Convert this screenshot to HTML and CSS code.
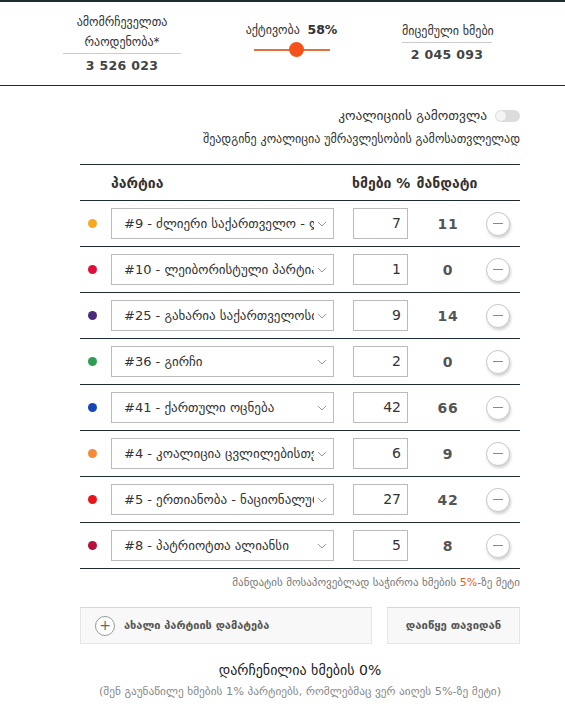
FILE: index.html
```html
<!DOCTYPE html>
<html lang="ka">
<head>
<meta charset="utf-8">
<link rel="stylesheet" href="styles.css">
</head>
<body>
<header class="stats">
  <div class="stat stat-voters">
    <div class="stat-label">ამომრჩეველთა<br>რაოდენობა*</div>
    <div class="stat-value">3 526 023</div>
  </div>
  <div class="stat stat-activity">
    <div class="activity-label">აქტივობა&nbsp; <b>58%</b></div>
    <div class="slider"><span class="slider-thumb" style="left:56%"></span></div>
  </div>
  <div class="stat stat-votes">
    <div class="stat-label">მიცემული ხმები</div>
    <div class="stat-value">2 045 093</div>
  </div>
</header>

<main class="content">
  <div class="coalition">
    <span>კოალიციის გამოთვლა</span>
    <span class="toggle"><span class="toggle-knob"></span></span>
  </div>
  <div class="coalition-hint">შეადგინე კოალიცია უმრავლესობის გამოსათვლელად</div>

  <div class="parties">
    <div class="row row-head">
      <span></span>
      <span class="head-party">პარტია</span>
      <span class="head-votes">ხმები %</span>
      <span class="head-mandates">მანდატი</span>
      <span></span>
    </div>

    <div class="row">
      <span class="dot" style="background:#f7a823"></span>
      <div class="select"><span class="select-text">#9 - ძლიერი საქართველო - ლელო, თავისუფლებისთვის</span><svg class="chev" viewBox="0 0 10 6" width="10" height="6"><polyline points="1,1 5,5 9,1"/></svg></div>
      <div class="num-input">7</div>
      <span class="mandates">11</span>
      <button class="remove"><span class="minus"></span></button>
    </div>

    <div class="row">
      <span class="dot" style="background:#e0103a"></span>
      <div class="select"><span class="select-text">#10 - ლეიბორისტული პარტია</span><svg class="chev" viewBox="0 0 10 6" width="10" height="6"><polyline points="1,1 5,5 9,1"/></svg></div>
      <div class="num-input">1</div>
      <span class="mandates">0</span>
      <button class="remove"><span class="minus"></span></button>
    </div>

    <div class="row">
      <span class="dot" style="background:#4a2d7a"></span>
      <div class="select"><span class="select-text">#25 - გახარია საქართველოსთვის</span><svg class="chev" viewBox="0 0 10 6" width="10" height="6"><polyline points="1,1 5,5 9,1"/></svg></div>
      <div class="num-input">9</div>
      <span class="mandates">14</span>
      <button class="remove"><span class="minus"></span></button>
    </div>

    <div class="row">
      <span class="dot" style="background:#2f9e55"></span>
      <div class="select"><span class="select-text">#36 - გირჩი</span><svg class="chev" viewBox="0 0 10 6" width="10" height="6"><polyline points="1,1 5,5 9,1"/></svg></div>
      <div class="num-input">2</div>
      <span class="mandates">0</span>
      <button class="remove"><span class="minus"></span></button>
    </div>

    <div class="row">
      <span class="dot" style="background:#1446b8"></span>
      <div class="select"><span class="select-text">#41 - ქართული ოცნება</span><svg class="chev" viewBox="0 0 10 6" width="10" height="6"><polyline points="1,1 5,5 9,1"/></svg></div>
      <div class="num-input">42</div>
      <span class="mandates">66</span>
      <button class="remove"><span class="minus"></span></button>
    </div>

    <div class="row">
      <span class="dot" style="background:#f28c38"></span>
      <div class="select"><span class="select-text">#4 - კოალიცია ცვლილებისთვის</span><svg class="chev" viewBox="0 0 10 6" width="10" height="6"><polyline points="1,1 5,5 9,1"/></svg></div>
      <div class="num-input">6</div>
      <span class="mandates">9</span>
      <button class="remove"><span class="minus"></span></button>
    </div>

    <div class="row">
      <span class="dot" style="background:#e8141c"></span>
      <div class="select"><span class="select-text">#5 - ერთიანობა - ნაციონალური მოძრაობა</span><svg class="chev" viewBox="0 0 10 6" width="10" height="6"><polyline points="1,1 5,5 9,1"/></svg></div>
      <div class="num-input">27</div>
      <span class="mandates">42</span>
      <button class="remove"><span class="minus"></span></button>
    </div>

    <div class="row">
      <span class="dot" style="background:#b5103c"></span>
      <div class="select"><span class="select-text">#8 - პატრიოტთა ალიანსი</span><svg class="chev" viewBox="0 0 10 6" width="10" height="6"><polyline points="1,1 5,5 9,1"/></svg></div>
      <div class="num-input">5</div>
      <span class="mandates">8</span>
      <button class="remove"><span class="minus"></span></button>
    </div>
  </div>

  <p class="threshold">მანდატის მოსაპოვებლად საჭიროა ხმების <span class="accent">5%</span>-ზე მეტი</p>

  <div class="actions">
    <button class="btn btn-add"><span class="plus">+</span>ახალი პარტიის დამატება</button>
    <button class="btn btn-reset">დაიწყე თავიდან</button>
  </div>

  <p class="remaining">დარჩენილია ხმების 0%</p>
  <p class="remaining-note">(შენ გაუნაწილე ხმების 1% პარტიებს, რომლებმაც ვერ აიღეს 5%-ზე მეტი)</p>
</main>
</body>
</html>
```

FILE: styles.css
```css
* { box-sizing: border-box; }

body {
  margin: 0;
  background: #fff;
  font-family: "DejaVu Sans", "Noto Sans", sans-serif;
  color: #333;
}

.stats {
  display: flex;
  align-items: center;
  gap: 65px;
  height: 86px;
  padding-left: 63px;
  border-top: 2px solid #1f2b30;
  border-bottom: 1px solid #1f2b30;
}

.stat {
  display: flex;
  flex-direction: column;
  align-items: center;
}

.stat-voters { width: 118px; }
.stat-activity { width: 91px; margin-bottom: 16px; }
.stat-votes { width: 90px; margin-bottom: 1px; }

.stat-label {
  width: 100%;
  text-align: center;
  font-size: 12px;
  line-height: 20px;
  white-space: nowrap;
  color: #333;
  border-bottom: 1px solid #ccc;
  padding-bottom: 1px;
}

.stat-value {
  font-size: 12.5px;
  font-weight: bold;
  line-height: 20px;
  color: #444;
  letter-spacing: 0.3px;
  margin-top: 2px;
}

.activity-label {
  font-size: 12px;
  line-height: 20px;
  white-space: nowrap;
}

.activity-label b { color: #333; font-size: 12.5px; }

.slider {
  position: relative;
  width: 76px;
  height: 2px;
  margin-top: 9px;
  background: #e07040;
}

.slider-thumb {
  position: absolute;
  top: -7px;
  width: 15px;
  height: 15px;
  margin-left: -7px;
  border-radius: 50%;
  background: #f4521a;
}

.content {
  width: 440px;
  margin-left: 80px;
}

.coalition {
  display: flex;
  justify-content: flex-end;
  align-items: center;
  gap: 8px;
  margin-top: 20px;
  font-size: 13.4px;
  line-height: 20px;
  color: #333;
}

.toggle {
  display: inline-block;
  position: relative;
  width: 25px;
  height: 12px;
  border-radius: 6px;
  background: #dcdcdc;
}

.toggle-knob {
  position: absolute;
  left: 1px;
  top: 1px;
  width: 10px;
  height: 10px;
  border-radius: 50%;
  background: #f4f4f4;
}

.coalition-hint {
  text-align: right;
  font-size: 12px;
  line-height: 16px;
  margin-top: 5px;
  color: #333;
  white-space: nowrap;
}

.parties {
  margin-top: 17px;
  border-top: 1px solid #1f2b30;
}

.row {
  display: grid;
  grid-template-columns: 31px 242px 55px 78px 34px;
  align-items: center;
  height: 46px;
  border-bottom: 1px solid #1f2b30;
}

.row-head {
  height: 36px;
  font-size: 14px;
  font-weight: bold;
  color: #333;
}

.head-votes {
  white-space: nowrap;
  margin-left: -1px;
}

.head-mandates {
  text-align: center;
  white-space: nowrap;
}

.dot {
  width: 9px;
  height: 9px;
  border-radius: 50%;
  margin-left: 8px;
}

.select {
  display: flex;
  align-items: center;
  width: 223px;
  height: 31px;
  padding: 0 6px 0 12px;
  border: 1px solid #bbb;
  font-size: 13px;
  color: #333;
}

.select-text {
  flex: 1;
  overflow: hidden;
  white-space: nowrap;
}

.chev {
  flex: none;
  margin-left: 3px;
  fill: none;
  stroke: #999;
  stroke-width: 1;
}

.num-input {
  height: 31px;
  line-height: 29px;
  border: 1px solid #bbb;
  text-align: right;
  padding-right: 6px;
  font-size: 14px;
  color: #333;
}

.mandates {
  text-align: center;
  font-size: 14px;
  font-weight: bold;
  letter-spacing: 0.8px;
  color: #555;
  margin-left: 2px;
}

.remove {
  width: 24px;
  height: 24px;
  padding: 0;
  border: 1px solid #c8c8c8;
  border-radius: 50%;
  background: #fff;
  box-shadow: 1px 2px 3px rgba(0, 0, 0, 0.18);
  display: flex;
  align-items: center;
  justify-content: center;
}

.minus {
  width: 10px;
  height: 1px;
  background: #888;
}

.threshold {
  margin: 6px 0 0;
  text-align: right;
  font-size: 11px;
  line-height: 16px;
  color: #777;
}

.accent { color: #e8601c; }

.actions {
  display: flex;
  gap: 15px;
  margin-top: 16px;
}

.btn {
  height: 37px;
  border: 1px solid #e6e6e6;
  border-top-color: #d6d6d6;
  background: #f8f8f8;
  font-family: inherit;
  font-size: 11px;
  font-weight: bold;
  color: #555;
  display: flex;
  align-items: center;
}

.btn-add {
  width: 292px;
  padding-left: 14px;
}

.btn-reset {
  flex: 1;
  justify-content: center;
  font-size: 11.3px;
}

.plus {
  width: 20px;
  height: 20px;
  margin-right: 9px;
  border: 1px solid #999;
  border-radius: 50%;
  background: #fff;
  font-weight: normal;
  font-size: 14px;
  line-height: 17px;
  text-align: center;
  color: #666;
}

.remaining {
  margin: 16px 0 0;
  text-align: center;
  font-size: 14px;
  line-height: 20px;
  color: #222;
}

.remaining-note {
  margin: 4px 0 0;
  text-align: center;
  font-size: 11.3px;
  line-height: 16px;
  color: #888;
  white-space: nowrap;
}
```
